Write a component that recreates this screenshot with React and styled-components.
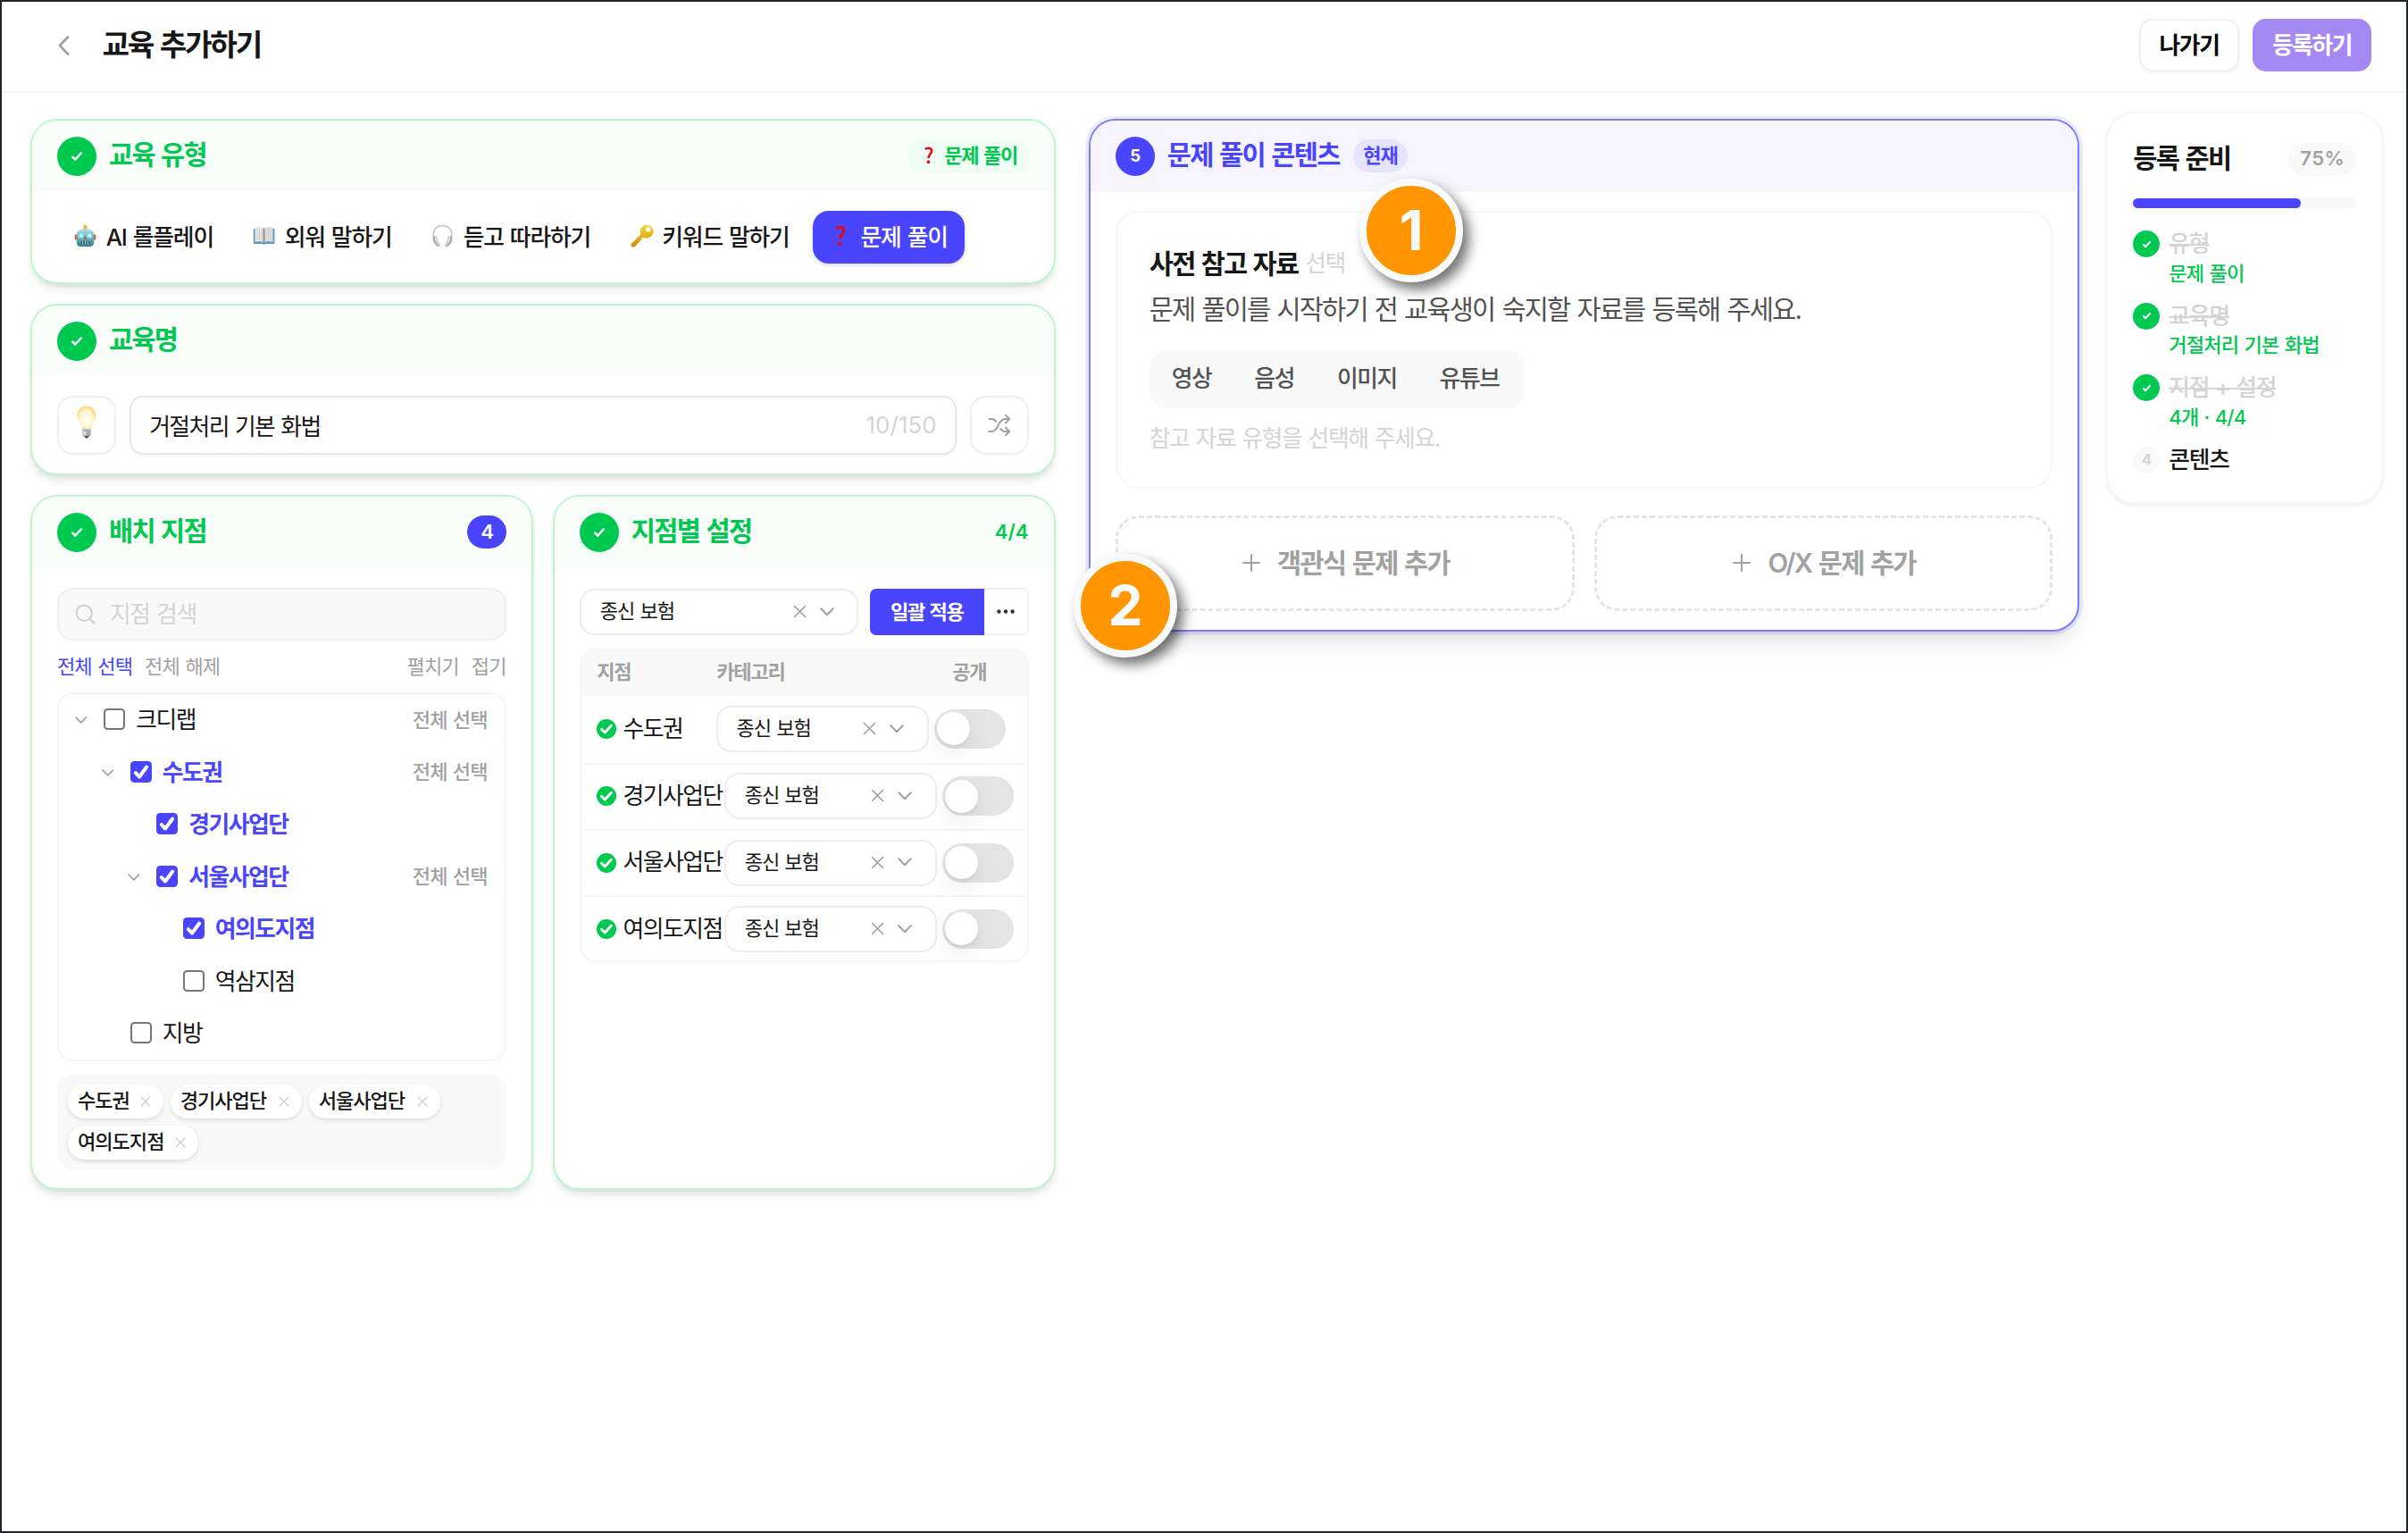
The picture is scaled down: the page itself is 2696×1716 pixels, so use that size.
import React, { useState } from 'react';
import styled, { createGlobalStyle, css } from 'styled-components';

const PRIMARY = '#4945ff';
const GREEN = '#00c950';
const GRAY = '#a1a1a1';
const LIGHT = '#d4d4d4';
const INK = '#171717';

const GlobalStyle = createGlobalStyle`
  * {
    box-sizing: border-box;
    letter-spacing: -0.056em;
    word-spacing: 0.05em;
  }
  body {
    margin: 0;
    background: #fff;
    color: ${INK};
    font-family: Inter, 'Noto Sans CJK KR', sans-serif;
    font-size: 25.8px;
    line-height: 1.4;
  }
  button, input {
    font-family: inherit;
    color: inherit;
    margin: 0;
  }
`;

const Frame = styled.div`
  position: relative;
  width: 2696px;
  height: 1716px;
  border: 2px solid #212529;
  background: #fff;
  overflow: hidden;
`;

const TopBar = styled.header`
  display: flex;
  align-items: center;
  height: 102px;
  padding: 0 39px 3px 62px;
  border-bottom: 2px solid #f5f5f5;
`;

const PageTitle = styled.h1`
  flex: 1;
  margin: 0 0 0 36.5px;
  font-size: 33.2px;
  font-weight: 600;
  letter-spacing: -0.068em;
`;

const TopButton = styled.button`
  width: ${({ $primary }) => ($primary ? 133 : 112)}px;
  height: 59px;
  margin-left: 15px;
  padding: 0 0 4px;
  border: ${({ $primary }) => ($primary ? '0' : '2px solid #f0f0f0')};
  border-radius: 15px;
  background: ${({ $primary }) => ($primary ? '#a688f4' : '#fff')};
  color: ${({ $primary }) => ($primary ? '#fff' : '#0a0a0a')};
  font-size: 25.8px;
  font-weight: 600;
  box-shadow: ${({ $primary }) => ($primary ? 'none' : '0 2px 4px rgba(0, 0, 0, 0.05)')};
`;

const Content = styled.main`
  display: flex;
  align-items: flex-start;
  padding: 21px 0 0 32.4px;
`;

const LeftColumn = styled.div`
  display: grid;
  grid-template-columns: 1fr 1fr;
  gap: 22px 22.6px;
  width: 1147.2px;
  margin: 8px 37.7px 0 0;
`;

const Card = styled.section`
  grid-column: ${({ $half }) => ($half ? 'auto' : '1 / -1')};
  height: ${({ $h }) => $h}px;
  border: 2px solid #b9f8cf;
  border-radius: 30px;
  background: #fff;
  overflow: hidden;
  box-shadow: 0 7px 11px -2px rgba(0, 0, 0, 0.1), 0 4px 7px -4px rgba(0, 0, 0, 0.1);
  ${({ $current }) =>
    $current &&
    css`
      width: 1109.2px;
      margin: 8px 29.8px 0 0;
      border-color: #7f7cff;
      box-shadow: 0 0 0 3.7px rgba(73, 69, 255, 0.1), 0 18px 28px -6px rgba(0, 0, 0, 0.1),
        0 7px 11px -7px rgba(0, 0, 0, 0.1);
    `}
`;

const CardHead = styled.div`
  display: flex;
  align-items: center;
  height: 79.3px;
  padding: 0 28px;
  background: ${({ $current }) => ($current ? '#f6f5ff' : '#f9fefb')};
  color: ${({ $current }) => ($current ? PRIMARY : GREEN)};
`;

const StepDot = styled.span`
  display: flex;
  flex: none;
  align-items: center;
  justify-content: center;
  width: ${({ $size = 44 }) => $size}px;
  height: ${({ $size = 44 }) => $size}px;
  border-radius: 50%;
  background: ${({ $bg = GREEN }) => $bg};
  color: ${({ $color = '#fff' }) => $color};
  font-size: ${({ $size = 44 }) => ($size > 40 ? 18.5 : 16.6)}px;
  font-weight: 700;
  letter-spacing: 0;
`;

const CardTitle = styled.h2`
  margin: 0 0 2px 13.5px;
  font-size: 29.5px;
  font-weight: 600;
`;

const HeadEnd = styled.div`
  display: flex;
  margin-left: auto;
`;

const CardBody = styled.div`
  padding: ${({ $top = 22 }) => $top}px 28px 0;
`;

const Pill = styled.span`
  display: flex;
  align-items: center;
  justify-content: center;
  gap: ${({ $gap = 0 }) => $gap}px;
  width: ${({ $w }) => $w}px;
  height: ${({ $h = 37 }) => $h}px;
  padding-bottom: 1px;
  border-radius: 20px;
  background: ${({ $bg }) => $bg};
  color: ${({ $color }) => $color};
  font-size: 22.1px;
  font-weight: 600;
`;

const CurrentPill = styled(Pill)`
  margin-left: 15px;
`;

const Ratio = styled.span`
  color: ${GREEN};
  font-size: 22.1px;
  font-weight: 600;
  letter-spacing: 0;
`;

const TypeList = styled.div`
  display: flex;
  gap: 3.7px;
`;

const TypeButton = styled.button`
  display: flex;
  align-items: center;
  gap: 9.3px;
  width: ${({ $w }) => $w}px;
  height: 59px;
  padding: 0 0 4px 18px;
  border: 0;
  border-radius: 18px;
  background: ${({ $on }) => ($on ? PRIMARY : 'transparent')};
  color: ${({ $on }) => ($on ? '#fff' : INK)};
  box-shadow: ${({ $on }) => ($on ? '0 2px 5px rgba(0, 0, 0, 0.15)' : 'none')};
  font-size: 25.8px;
  font-weight: 500;
  letter-spacing: -0.045em;
  white-space: nowrap;
`;

const NameRow = styled.div`
  display: flex;
  gap: 14.8px;
`;

const SquareButton = styled.button`
  display: flex;
  align-items: center;
  justify-content: center;
  width: 66px;
  height: 66px;
  padding: 0 0 ${({ $lift = 0 }) => $lift}px;
  border: 2px solid #efefef;
  border-radius: 18px;
  background: #fff;
`;

const NameField = styled.label`
  display: flex;
  flex: 1;
  align-items: center;
  height: 66px;
  padding: 0 20px 1px;
  border: 2px solid #e8e8e8;
  border-radius: 15px;
  box-shadow: 0 2px 4px rgba(0, 0, 0, 0.04);
`;

const TextInput = styled.input`
  flex: 1;
  min-width: 0;
  padding: 0;
  border: 0;
  outline: 0;
  background: transparent;
  font-size: 25.8px;
  letter-spacing: -0.06em;
  &::placeholder {
    color: ${LIGHT};
    opacity: 1;
    letter-spacing: -0.05em;
  }
`;

const Counter = styled.span`
  color: ${LIGHT};
  letter-spacing: 0.005em;
`;

const SearchBox = styled.label`
  display: flex;
  align-items: center;
  gap: 15.5px;
  height: 59px;
  padding: 0 18px;
  border: 2px solid #efefef;
  border-radius: 18px;
  background: #f9f9f9;
`;

const LinkRow = styled.div`
  display: flex;
  align-items: center;
  gap: 14.5px;
  height: 58px;
`;

const TextLink = styled.a`
  color: ${({ $active }) => ($active ? PRIMARY : GRAY)};
  font-size: 22.1px;
  letter-spacing: -0.04em;
  margin-left: ${({ $push }) => ($push ? 'auto' : '-0.5px')};
`;

const Tree = styled.div`
  height: 413px;
  border: 2px solid #f6f6f6;
  border-radius: 18px;
`;

const TreeRow = styled.div`
  display: flex;
  align-items: center;
  height: 58.5px;
  padding: 0 19px 1px ${({ $level }) => 18 + $level * 29.5}px;
  color: ${({ $checked }) => ($checked ? PRIMARY : INK)};
  font-weight: ${({ $checked }) => ($checked ? 600 : 400)};
`;

const ChevronSlot = styled.span`
  display: flex;
  width: 32px;
`;

const TreeLabel = styled.span`
  flex: 1;
  margin-left: 11.8px;
`;

const RowAction = styled.a`
  color: ${GRAY};
  font-size: 22.1px;
  font-weight: 500;
  letter-spacing: -0.04em;
`;

const Box = styled.span`
  display: flex;
  align-items: center;
  justify-content: center;
  width: 24px;
  height: 24px;
  margin-bottom: 2px;
  border: ${({ $checked }) => ($checked ? '0' : '2px solid #767676')};
  border-radius: 4.5px;
  background: ${({ $checked }) => ($checked ? PRIMARY : '#fff')};
`;

const Chips = styled.div`
  display: flex;
  flex-wrap: wrap;
  align-content: flex-start;
  gap: 8px;
  height: 106.5px;
  margin-top: 14px;
  padding: 11.7px;
  border-radius: 18px;
  background: #f9f9f9;
`;

const Chip = styled.span`
  display: flex;
  align-items: center;
  justify-content: space-between;
  width: ${({ $w }) => $w}px;
  height: 38px;
  padding: 0 14px 1px 11px;
  border-radius: 19px;
  background: #fff;
  box-shadow: 0 2px 5px rgba(0, 0, 0, 0.12);
  font-size: 22.1px;
  font-weight: 500;
  letter-spacing: -0.048em;
`;

const BulkRow = styled.div`
  display: flex;
  align-items: center;
  height: 53px;
  margin-bottom: 14.8px;
`;

const Select = styled.div`
  display: flex;
  flex: none;
  align-items: center;
  width: ${({ $w }) => $w}px;
  height: 52px;
  padding: 0 ${({ $w }) => ($w > 300 ? 25 : 26)}px 1px 20.5px;
  border: 2px solid #ededed;
  border-radius: 17px;
  background: #fff;
  color: ${INK};
  font-size: 22.1px;
`;

const SelectValue = styled.span`
  flex: 1;
  letter-spacing: -0.05em;
`;

const SelectIcons = styled.span`
  display: flex;
  align-items: center;
  gap: 15px;
`;

const ApplyButton = styled.button`
  width: 128px;
  height: 52px;
  margin-left: 12.5px;
  padding: 0 0 3px;
  border: 0;
  border-radius: 7px 0 0 7px;
  background: ${PRIMARY};
  color: #fff;
  font-size: 22.1px;
  font-weight: 600;
`;

const MoreButton = styled.button`
  display: flex;
  flex: 1;
  align-items: center;
  justify-content: center;
  height: 53px;
  padding: 0;
  border: 2px solid #f0f0f0;
  border-left: 0;
  border-radius: 0 7px 7px 0;
  background: #fff;
`;

const Table = styled.div`
  height: 351px;
  border: 2px solid #f6f6f6;
  border-radius: 18px;
  overflow: hidden;
`;

const TableHead = styled.div`
  display: grid;
  grid-template-columns: 134px 264px 1fr;
  align-items: center;
  height: 51px;
  padding: 0 17px 2px;
  background: #f9f9f9;
  color: ${GRAY};
  font-size: 22.1px;
  font-weight: 600;
`;

const TableRow = styled.div`
  display: flex;
  align-items: center;
  height: 74.3px;
  padding: 0 0 1px 17.2px;
  & + & {
    border-top: 2px solid #f6f6f6;
  }
`;

const BranchName = styled.span`
  display: flex;
  align-items: center;
  gap: 7px;
  width: ${({ $long }) => ($long ? 142.7 : 133.6)}px;
  white-space: nowrap;
`;

const Toggle = styled.span`
  display: flex;
  flex: none;
  align-items: center;
  width: 80px;
  height: 44px;
  margin-left: 6px;
  padding-left: 2.5px;
  border-radius: 22px;
  background: #e4e4e4;
`;

const Knob = styled.span`
  width: 37px;
  height: 37px;
  border-radius: 50%;
  background: #fff;
  box-shadow: 0 3px 4px rgba(0, 0, 0, 0.05), 0 12px 28px rgba(0, 0, 0, 0.07);
`;

const Material = styled.div`
  height: 310.3px;
  padding: 35px 36px 0 35.5px;
  border: 2px solid #f8f8f8;
  border-radius: 26px;
`;

const MaterialTitle = styled.h3`
  display: flex;
  align-items: center;
  gap: 8px;
  height: 44px;
  margin: 0;
  font-size: 29.5px;
  font-weight: 600;
  letter-spacing: -0.06em;
`;

const Optional = styled.span`
  color: ${LIGHT};
  font-size: 25.8px;
  font-weight: 400;
`;

const Description = styled.p`
  height: 48px;
  margin: 5px 0 22px;
  color: #525252;
  font-size: 29.5px;
  line-height: 48px;
  letter-spacing: -0.061em;
`;

const Segment = styled.div`
  display: flex;
  align-items: center;
  gap: 48px;
  width: 419.5px;
  height: 65px;
  padding: 0 0 1px 25px;
  border-radius: 18px;
  background: #f9f9f9;
  color: #525252;
  font-weight: 500;
`;

const Hint = styled.p`
  margin: 15.5px 0 0;
  color: ${LIGHT};
  letter-spacing: -0.054em;
`;

const AddRow = styled.div`
  display: grid;
  grid-template-columns: 1fr 1fr;
  gap: 22px;
  margin-top: 30px;
`;

const AddButton = styled.button`
  display: flex;
  align-items: center;
  justify-content: center;
  gap: 19px;
  height: 107.5px;
  padding: 0 0 5px 2px;
  border: 3px dashed #e5e5e5;
  border-radius: 26px;
  background: #fff;
  color: ${GRAY};
  font-size: 29.5px;
  font-weight: 600;
  svg {
    margin-top: 5px;
  }
`;

const SideCard = styled.aside`
  width: 310.2px;
  height: 439px;
  padding: 32px 28px 0;
  border: 2px solid #f7f7f7;
  border-radius: 32px;
  background: #fff;
  box-shadow: 0 2px 5px rgba(0, 0, 0, 0.08);
`;

const SideHead = styled.div`
  display: flex;
  align-items: center;
  justify-content: space-between;
  height: 38px;
  font-size: 29.5px;
  font-weight: 600;
`;

const Percent = styled(Pill)`
  letter-spacing: 0.02em;
`;

const Track = styled.div`
  height: 11px;
  margin: 25px 0 25px;
  border-radius: 6px;
  background: #f9f9f9;
`;

const Fill = styled.div`
  height: 100%;
  border-radius: 6px;
  background: ${PRIMARY};
`;

const Step = styled.div`
  display: flex;
  gap: 10px;
  height: 80.6px;
`;

const StepLabel = styled.div`
  height: 30px;
  line-height: 30px;
  font-weight: 500;
  letter-spacing: -0.047em;
  color: ${({ $done }) => ($done ? LIGHT : INK)};
  text-decoration: ${({ $done }) => ($done ? 'line-through' : 'none')};
  text-decoration-thickness: 2px;
`;

const StepNote = styled.div`
  margin-top: 2.5px;
  color: ${GREEN};
  font-size: 22.1px;
  font-weight: 500;
  line-height: 30px;
  letter-spacing: -0.037em;
`;

/* numbered callouts lie over the cards */
const Callout = styled.div`
  position: absolute;
  left: ${({ $x }) => $x}px;
  top: ${({ $y }) => $y}px;
  display: flex;
  align-items: center;
  justify-content: center;
  width: 116px;
  height: 116px;
  border: 8px solid #f8fafc;
  border-radius: 50%;
  background: #ff9500;
  color: #f8fafc;
  font-size: 62px;
  font-weight: 700;
  letter-spacing: 0;
  line-height: 1;
  box-shadow: 7px 8px 14px rgba(0, 0, 0, 0.55);
`;

const Stroke = ({ w, h, box, d, color = GRAY, width = 2 }) => (
  <svg
    width={w}
    height={h}
    viewBox={box || `0 0 ${w} ${h}`}
    fill="none"
    stroke={color}
    strokeWidth={width}
    strokeLinecap="round"
    strokeLinejoin="round"
  >
    <path d={d} />
  </svg>
);

const BackIcon = () => <Stroke w={14} h={24} d="M12 2.5 3 12l9 9.5" width={2.8} />;
const CheckIcon = ({ size = 14, tick = 'M2.6 8.6 6 12l7.4-8' }) => (
  <Stroke w={size} h={size} box="0 0 16 16" d={tick} color="#fff" width={2.9} />
);
const CrossIcon = ({ size = 15, color = GRAY }) => (
  <Stroke w={size} h={size} box="0 0 15 15" d="M1.5 1.5l12 12M13.5 1.5l-12 12" color={color} width={1.7} />
);
const DownIcon = ({ w = 16 }) => <Stroke w={w} h={w * 0.6} box="0 0 16 9.6" d="M1.2 1.2 8 8.2l6.8-7" />;
const PlusIcon = () => <Stroke w={20} h={20} d="M10 1v18M1 10h18" />;
const SearchIcon = () => (
  <Stroke w={23} h={23} d="M17.2 17.2 21.5 21.5M10.2 1.5a8.7 8.7 0 1 0 0 17.4a8.7 8.7 0 0 0 0-17.4z" color="#cfcfcf" />
);
const ShuffleIcon = () => (
  <Stroke
    w={26}
    h={26}
    d="M1.5 6H4c2.3 0 4 1 5.3 3M1.5 20H4c3 0 4.5-1.5 6-4l3.5-6c1.4-2.4 3-4 6-4H24M20 1.8 24.2 6 20 10.2M24 20h-4.5c-2.5 0-4-1-5.3-3M20 15.8 24.2 20 20 24.2"
  />
);
const DotsIcon = () => (
  <svg width="20" height="5" viewBox="0 0 20 5" fill="#333">
    <circle cx="2.4" cy="2.5" r="2.2" />
    <circle cx="10" cy="2.5" r="2.2" />
    <circle cx="17.6" cy="2.5" r="2.2" />
  </svg>
);
const GreenCheck = () => (
  <svg width="22" height="22" viewBox="0 0 22 22" fill="none">
    <circle cx="11" cy="11" r="11" fill={GREEN} />
    <path d="M5.5 11.3 9.3 15l7-7.8" stroke="#fff" strokeWidth="2.9" strokeLinecap="round" strokeLinejoin="round" />
  </svg>
);

const RobotIcon = () => (
  <svg width="27" height="26" viewBox="0 0 27 26">
    <defs>
      <linearGradient id="robot" x1="0" y1="0" x2="0" y2="1">
        <stop offset="0" stopColor="#b9dadd" />
        <stop offset="0.5" stopColor="#6fb0ba" />
        <stop offset="1" stopColor="#2f7f8c" />
      </linearGradient>
    </defs>
    <rect x="11.7" y="2.5" width="3.6" height="4" fill="#8bb4bb" />
    <circle cx="13.5" cy="2.6" r="2.2" fill="#f7b733" />
    <rect x="1.7" y="11.5" width="3" height="6" rx="1.3" fill="#d8553f" />
    <rect x="22.3" y="11.5" width="3" height="6" rx="1.3" fill="#d8553f" />
    <path d="M3.7 12c0-4.5 3.5-6.8 9.8-6.8s9.8 2.3 9.8 6.8v8c0 3.5-2 5-5 5H8.7c-3 0-5-1.5-5-5z" fill="url(#robot)" />
    <circle cx="8.7" cy="12.7" r="3.4" fill="#5ce1f5" />
    <circle cx="18.3" cy="12.7" r="3.4" fill="#5ce1f5" />
    <circle cx="8.7" cy="12.7" r="1.9" fill="#f2ffff" />
    <circle cx="18.3" cy="12.7" r="1.9" fill="#f2ffff" />
    <path d="m13.5 13.5 1.8 3.2h-3.6z" fill="#e8402c" />
    <rect x="8.7" y="18.7" width="9.6" height="3.4" rx="1" fill="#3b5b62" />
    <path d="M10.7 18.7v3.4M13.5 18.7v3.4M16.3 18.7v3.4" stroke="#bcd6da" strokeWidth="1" />
  </svg>
);

const BookIcon = () => (
  <svg width="27" height="26" viewBox="0 0 27 26">
    <path d="M1.8 5h23.6v17H15.5l-2 .8-2-.8H1.8z" fill="#5b9cc0" />
    <path d="M3.5 3.5c4-1 8-.6 10 1v16c-2.5-1.3-6-1.4-10-.8z" fill="#eceae8" />
    <path d="M23.5 3.5c-4-1-8-.6-10 1v16c2.5-1.3 6-1.4 10-.8z" fill="#e2e0de" />
    <path d="M13.5 4.5v16" stroke="#77797b" strokeWidth="1.5" />
    <path
      d="M6 5v13M8.5 5v13M11 5.5v13M16 5.5v13M18.5 5v13M21 5v13"
      stroke="#c9c6c3"
      strokeWidth="0.9"
      fill="none"
    />
  </svg>
);

const HeadphoneIcon = () => (
  <svg width="27" height="26" viewBox="0 0 27 26" fill="none">
    <path d="M4.5 18C1 8.5 5.5 1.5 13.5 1.5S26 8.5 22.5 18" stroke="#c4c4c4" strokeWidth="1.6" />
    <path
      d="M4 14.5c-.8 3.5 1.3 7 4.8 9.5M23 14.5c.8 3.5-1.3 7-4.8 9.5"
      stroke="#a9a9a9"
      strokeWidth="2.4"
      strokeLinecap="round"
    />
    <path
      d="M6.5 14c.3 3.5 1.5 6.5 3.7 9M20.5 14c-.3 3.5-1.5 6.5-3.7 9"
      stroke="#d6d6d6"
      strokeWidth="2.4"
      strokeLinecap="round"
    />
  </svg>
);

const KeyIcon = () => (
  <svg width="27" height="26" viewBox="0 0 27 26">
    <defs>
      <linearGradient id="key" x1="0" y1="0" x2="0" y2="1">
        <stop offset="0" stopColor="#f9d62e" />
        <stop offset="1" stopColor="#cf8a12" />
      </linearGradient>
    </defs>
    <path
      fillRule="evenodd"
      d="M19 .8a7.3 7.3 0 0 1 1.5 14.5c-2 .6-4 .3-5.7-.5l-2 2 .2 1.7-2 .3-.4 2-2 .3-.5 2-2.3 2.2-3.9.2-.5-3.2L12.3 11.5C10.5 6.5 13.5.8 19 .8zM20.7 3.2a2.7 2.7 0 1 0 0 5.4a2.7 2.7 0 0 0 0-5.4z"
      fill="url(#key)"
    />
  </svg>
);

const QuestionIcon = ({ size = 26 }) => (
  <svg width={size} height={size} viewBox="0 0 26 26" fill="none">
    <path d="M8 4.8c3-2.5 8.700-2 8.700 2.300 0 4.200-4.300 4.500-4.300 9.400" stroke="#e8060c" strokeWidth="3" />
    <circle cx="12.4" cy="21.7" r="2.2" fill="#e8060c" />
  </svg>
);

const BulbIcon = () => (
  <svg width="22" height="37" viewBox="0 0 22 37">
    <defs>
      <radialGradient id="glass" cx="50%" cy="55%" r="55%">
        <stop offset="0" stopColor="#fffefa" />
        <stop offset="0.6" stopColor="#fff5d2" />
        <stop offset="1" stopColor="#f6d878" />
      </radialGradient>
    </defs>
    <path d="M11 .5c6 0 10.5 4.5 10.5 10.5 0 6.500-5 8.500-5.700 16H6.200C5.500 19.500.5 17.500.5 11 .5 5 5 .5 11 .5z" fill="url(#glass)" />
    <path d="M6.3 26.5h9.400v6c0 1.500-1.500 2-2.500 2.500L11 37l-2.200-2c-1-.5-2.500-1-2.500-2.500z" fill="#a9a9a9" />
    <path d="M6.5 28.5h4v5h-3.500z" fill="#d8d8d8" />
    <path d="m7.5 34 3.500 3 3.500-3z" fill="#555" />
  </svg>
);

const types = [
  { label: 'AI 롤플레이', icon: RobotIcon, w: 196.3 },
  { label: '외워 말하기', icon: BookIcon, w: 196.3 },
  { label: '듣고 따라하기', icon: HeadphoneIcon, w: 218.9 },
  { label: '키워드 말하기', icon: KeyIcon, w: 219.6 },
  { label: '문제 풀이', icon: QuestionIcon, w: 170 },
];

const tree = [
  { name: '크디랩', level: 0, open: true, action: true },
  { name: '수도권', level: 1, open: true, checked: true, action: true },
  { name: '경기사업단', level: 2, checked: true },
  { name: '서울사업단', level: 2, open: true, checked: true, action: true },
  { name: '여의도지점', level: 3, checked: true },
  { name: '역삼지점', level: 3 },
  { name: '지방', level: 1 },
];

const branches = [
  { name: '수도권', chip: 106.7 },
  { name: '경기사업단', chip: 147 },
  { name: '서울사업단', chip: 147 },
  { name: '여의도지점', chip: 145.6 },
];

const steps = [
  { label: '유형', note: '문제 풀이' },
  { label: '교육명', note: '거절처리 기본 화법' },
  { label: '지점 + 설정', note: '4개 · 4/4' },
  { label: '콘텐츠' },
];

const DoneHead = ({ title, children }) => (
  <CardHead>
    <StepDot>
      <CheckIcon />
    </StepDot>
    <CardTitle>{title}</CardTitle>
    <HeadEnd>{children}</HeadEnd>
  </CardHead>
);

const CategorySelect = ({ width }) => (
  <Select $w={width}>
    <SelectValue>종신 보험</SelectValue>
    <SelectIcons>
      <CrossIcon />
      <DownIcon />
    </SelectIcons>
  </Select>
);

const App = () => {
  const [type, setType] = useState('문제 풀이');
  const [name, setName] = useState('거절처리 기본 화법');

  return (
    <>
      <GlobalStyle />
      <Frame>
        <TopBar>
          <BackIcon />
          <PageTitle>교육 추가하기</PageTitle>
          <TopButton type="button">나가기</TopButton>
          <TopButton type="button" $primary>
            등록하기
          </TopButton>
        </TopBar>

        <Content>
          <LeftColumn>
            <Card $h={185.2}>
              <DoneHead title="교육 유형">
                <Pill $w={134.8} $h={38} $gap={6} $bg="#f0fdf4" $color={GREEN}>
                  <QuestionIcon size={22} />
                  {type}
                </Pill>
              </DoneHead>
              <CardBody>
                <TypeList>
                  {types.map(({ label, icon: Icon, w }) => (
                    <TypeButton
                      key={label}
                      type="button"
                      $w={w}
                      $on={label === type}
                      onClick={() => setType(label)}
                    >
                      <Icon />
                      {label}
                    </TypeButton>
                  ))}
                </TypeList>
              </CardBody>
            </Card>

            <Card $h={192}>
              <DoneHead title="교육명" />
              <CardBody>
                <NameRow>
                  <SquareButton type="button" $lift={8}>
                    <BulbIcon />
                  </SquareButton>
                  <NameField>
                    <TextInput value={name} onChange={(e) => setName(e.target.value)} />
                    <Counter>{name.length}/150</Counter>
                  </NameField>
                  <SquareButton type="button">
                    <ShuffleIcon />
                  </SquareButton>
                </NameRow>
              </CardBody>
            </Card>

            <Card $half $h={778}>
              <DoneHead title="배치 지점">
                <Pill $w={43.5} $bg={PRIMARY} $color="#fff">
                  4
                </Pill>
              </DoneHead>
              <CardBody $top={23}>
                <SearchBox>
                  <SearchIcon />
                  <TextInput placeholder="지점 검색" />
                </SearchBox>
                <LinkRow>
                  <TextLink $active>전체 선택</TextLink>
                  <TextLink>전체 해제</TextLink>
                  <TextLink $push>펼치기</TextLink>
                  <TextLink>접기</TextLink>
                </LinkRow>
                <Tree>
                  {tree.map(({ name: label, level, open, checked, action }) => (
                    <TreeRow key={label} $level={level} $checked={checked}>
                      <ChevronSlot>{open && <DownIcon w={13.5} />}</ChevronSlot>
                      <Box $checked={checked}>
                        {checked && <CheckIcon size={22} tick="M3.5 8.8 6.6 12 12.5 4" />}
                      </Box>
                      <TreeLabel>{label}</TreeLabel>
                      {action && <RowAction>전체 선택</RowAction>}
                    </TreeRow>
                  ))}
                </Tree>
                <Chips>
                  {branches.map(({ name: label, chip }) => (
                    <Chip key={label} $w={chip}>
                      {label}
                      <CrossIcon size={12} color="#cfcfcf" />
                    </Chip>
                  ))}
                </Chips>
              </CardBody>
            </Card>

            <Card $half $h={778}>
              <DoneHead title="지점별 설정">
                <Ratio>4/4</Ratio>
              </DoneHead>
              <CardBody $top={23}>
                <BulkRow>
                  <CategorySelect width={312} />
                  <ApplyButton type="button">일괄 적용</ApplyButton>
                  <MoreButton type="button">
                    <DotsIcon />
                  </MoreButton>
                </BulkRow>
                <Table>
                  <TableHead>
                    <span>지점</span>
                    <span>카테고리</span>
                    <span>공개</span>
                  </TableHead>
                  {branches.map(({ name: label }) => (
                    <TableRow key={label}>
                      <BranchName $long={label.length > 3}>
                        <GreenCheck />
                        {label}
                      </BranchName>
                      <CategorySelect width={238} />
                      <Toggle>
                        <Knob />
                      </Toggle>
                    </TableRow>
                  ))}
                </Table>
              </CardBody>
            </Card>
          </LeftColumn>

          <Card $current $h={574.3}>
            <CardHead $current>
              <StepDot $bg={PRIMARY}>5</StepDot>
              <CardTitle>문제 풀이 콘텐츠</CardTitle>
              <CurrentPill $w={61.5} $bg="#e6e5ff" $color={PRIMARY}>
                현재
              </CurrentPill>
            </CardHead>
            <CardBody>
              <Material>
                <MaterialTitle>
                  사전 참고 자료
                  <Optional>선택</Optional>
                </MaterialTitle>
                <Description>문제 풀이를 시작하기 전 교육생이 숙지할 자료를 등록해 주세요.</Description>
                <Segment>
                  <span>영상</span>
                  <span>음성</span>
                  <span>이미지</span>
                  <span>유튜브</span>
                </Segment>
                <Hint>참고 자료 유형을 선택해 주세요.</Hint>
              </Material>
              <AddRow>
                <AddButton type="button">
                  <PlusIcon />
                  객관식 문제 추가
                </AddButton>
                <AddButton type="button">
                  <PlusIcon />
                  O/X 문제 추가
                </AddButton>
              </AddRow>
            </CardBody>
          </Card>

          <SideCard>
            <SideHead>
              등록 준비
              <Percent $w={76.5} $bg="#f9f9f9" $color={GRAY}>
                75%
              </Percent>
            </SideHead>
            <Track>
              <Fill style={{ width: '75%' }} />
            </Track>
            {steps.map(({ label, note }, i) => (
              <Step key={label}>
                {note ? (
                  <StepDot $size={30}>
                    <CheckIcon size={11} />
                  </StepDot>
                ) : (
                  <StepDot $size={30} $bg="#f9f9f9" $color={LIGHT}>
                    {i + 1}
                  </StepDot>
                )}
                <div>
                  <StepLabel $done={Boolean(note)}>{label}</StepLabel>
                  {note && <StepNote>{note}</StepNote>}
                </div>
              </Step>
            ))}
          </SideCard>
        </Content>

        <Callout $x={1520} $y={198}>
          1
        </Callout>
        <Callout $x={1200} $y={617.5}>
          2
        </Callout>
      </Frame>
    </>
  );
};

export default App;
